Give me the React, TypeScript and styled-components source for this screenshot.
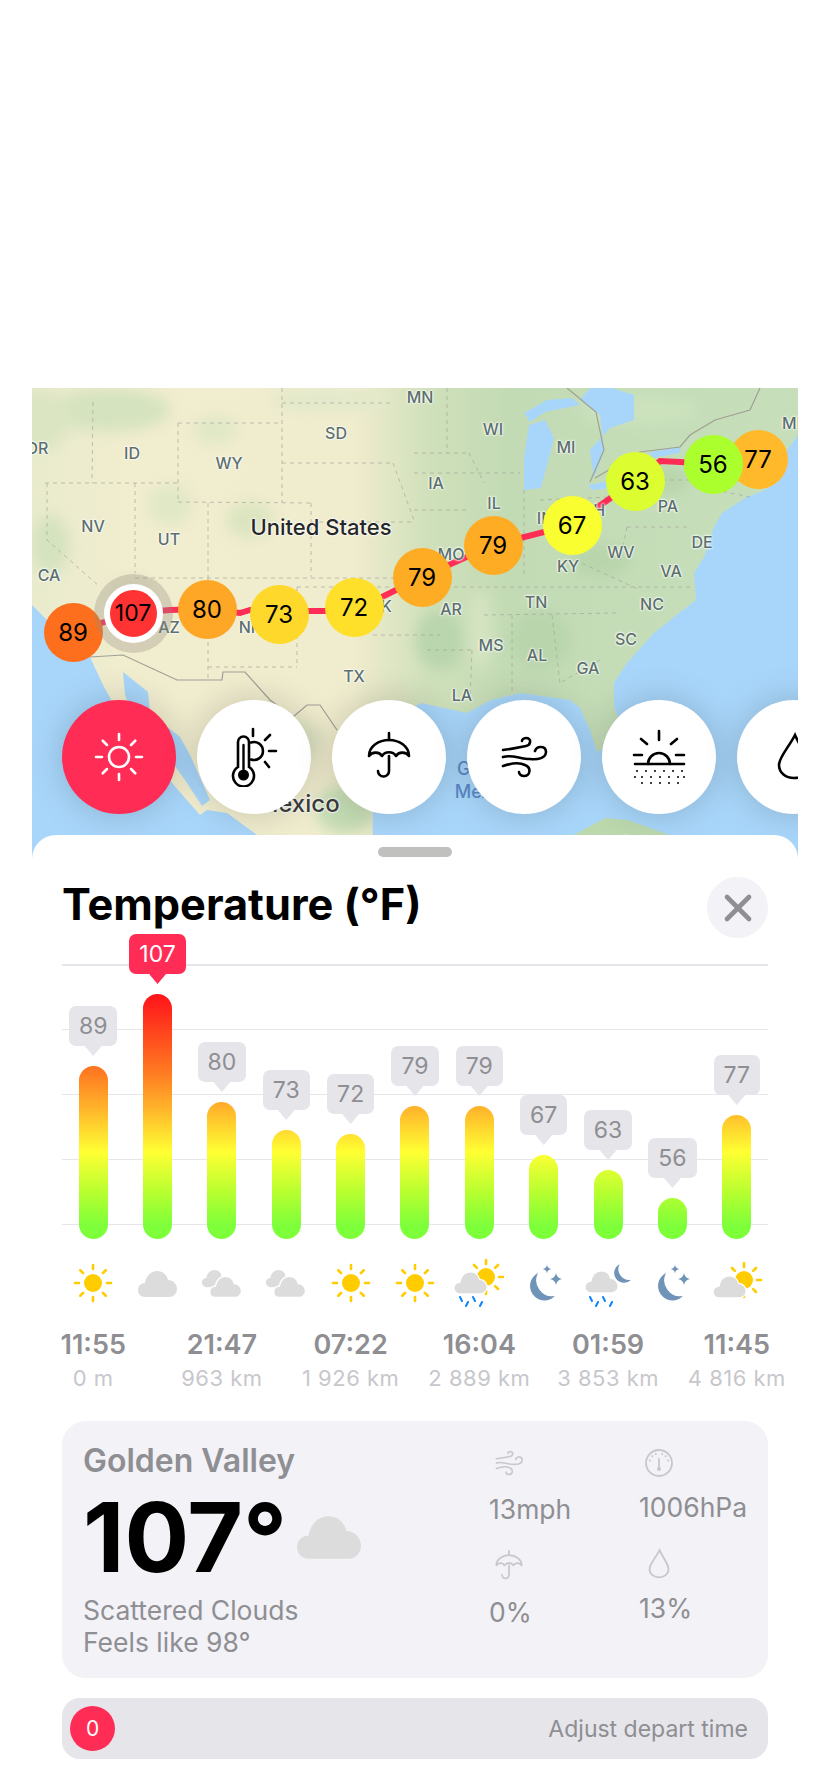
import React from "react"
import styled, { createGlobalStyle } from "styled-components"

const pink = "#ff2d55"
const gray = "#8e8e93"
const lightGray = "#c7c7cc"
const sunYellow = "#ffcc00"
const cloudGray = "#dcdcdc"
const moonBlue = "#7093b8"
const rainBlue = "#0a84ff"

const GlobalStyle = createGlobalStyle`
  html, body {
    margin: 0;
    padding: 0;
    background: #fff;
  }
  body {
    font-family: "Inter", "Liberation Sans", sans-serif;
  }
`

const Page = styled.div`
  width: 828px;
  height: 1792px;
  box-sizing: border-box;
  padding: 388px 30px 0 32px;
  overflow: hidden;
`

const MapFrame = styled.div`
  position: relative;
  height: 471px;
  overflow: hidden;
  background: #a8d6fa;
`

const MapArt = styled.svg`
  position: absolute;
  inset: 0;
  width: 766px;
  height: 471px;
`

const MapLabel = styled.span<{ $x: number; $y: number }>`
  position: absolute;
  left: ${(p) => p.$x - 32}px;
  top: ${(p) => p.$y - 388}px;
  transform: translate(-50%, -50%);
  font-size: 16px;
  font-weight: 500;
  color: #5b706c;
  white-space: nowrap;
  text-shadow: 0 0 2px #fff, 0 0 2px #fff, 0 0 3px #fff;
`

const CountryLabel = styled(MapLabel)`
  font-size: 22px;
  color: #262626;
`

const MexicoLabel = styled(MapLabel)`
  font-size: 24px;
  color: #3c3c3c;
`

const GulfLabel = styled(MapLabel)`
  font-size: 18px;
  line-height: 23px;
  color: #5a8ac6;
  text-shadow: none;
  text-align: center;
`

const Pin = styled.div<{ $x: number; $y: number; $color: string }>`
  position: absolute;
  left: ${(p) => p.$x - 32 - 29.5}px;
  top: ${(p) => p.$y - 388 - 29.5}px;
  width: 59px;
  height: 59px;
  border-radius: 50%;
  background: ${(p) => p.$color};
  display: flex;
  align-items: center;
  justify-content: center;
  font-size: 24px;
  color: #000;
`

const SelectedPin = styled(Pin)`
  box-sizing: border-box;
  border: 6px solid #fff;
  box-shadow: 0 0 0 10px rgba(150, 140, 128, 0.32);
  font-size: 23px;
`

const ModeStrip = styled.div`
  position: absolute;
  left: 30px;
  top: 312px;
  display: flex;
  gap: 21px;
`

const ModeButton = styled.div<{ $active?: boolean }>`
  flex: none;
  width: 114px;
  height: 114px;
  border-radius: 50%;
  background: ${(p) => (p.$active ? pink : "#fff")};
  box-shadow: 0 0 36px rgba(0, 0, 0, 0.18);
  display: flex;
  align-items: center;
  justify-content: center;
  color: ${(p) => (p.$active ? "#fff" : "#000")};
`

const Sheet = styled.section`
  position: relative;
  margin-top: -24px;
  height: 957px;
  box-sizing: border-box;
  padding: 12px 30px 0;
  background: #fff;
  border-radius: 24px 24px 0 0;
`

const Handle = styled.div`
  width: 74px;
  height: 10px;
  margin: 0 auto;
  border-radius: 5px;
  background: #c0c1bf;
`

const Header = styled.header`
  display: flex;
  align-items: center;
  justify-content: space-between;
  margin-top: 20px;
  height: 61px;
`

const Title = styled.h1`
  margin: 0 0 8px;
  font-size: 43.3px;
  font-weight: 700;
  color: #000;
`

const CloseButton = styled.div`
  width: 61px;
  height: 61px;
  border-radius: 50%;
  background: #f2f2f7;
  display: flex;
  align-items: center;
  justify-content: center;
`

const Chart = styled.div`
  display: grid;
  grid-template-areas: "plot";
  height: 309px;
  margin-top: -8px;
`

const GridLines = styled.div`
  grid-area: plot;
  display: flex;
  flex-direction: column;
  justify-content: space-between;
  padding: 34px 0 14px;
`

const GridLine = styled.div`
  height: 1.5px;
  background: #e5e5ea;
`

const Columns = styled.div`
  grid-area: plot;
  display: grid;
  grid-template-columns: repeat(11, minmax(0, 1fr));
  margin: 0 -1px;
`

const BarColumn = styled.div`
  display: flex;
  flex-direction: column;
  align-items: center;
  justify-content: flex-end;
`

const Bubble = styled.div<{ $hot?: boolean }>`
  position: relative;
  height: 40px;
  padding: 0 10px;
  margin-bottom: 20px;
  border-radius: 7px;
  background: ${(p) => (p.$hot ? pink : "#e5e5ea")};
  color: ${(p) => (p.$hot ? "#fff" : gray)};
  font-size: 23px;
  line-height: 40px;

  &::after {
    content: "";
    position: absolute;
    left: 50%;
    bottom: -10px;
    width: 17px;
    height: 10px;
    background: inherit;
    transform: translateX(-50%);
    clip-path: polygon(0 0, 100% 0, 50% 100%);
  }
`

const Bar = styled.div<{ $height: number }>`
  width: 29px;
  height: ${(p) => p.$height}px;
  border-radius: 15px;
  background-image: linear-gradient(
    to bottom,
    #ff1418 0,
    #ff1f1a 10px,
    #ff7d22 80px,
    #ffb02a 112px,
    #ffff33 158px,
    #b4ff30 200px,
    #7dff3a 232px
  );
  background-size: 100% 245px;
  background-position: bottom;
`

const Forecast = styled.div`
  display: grid;
  grid-template-columns: repeat(11, minmax(0, 1fr));
  margin: 20px -1px 0;
`

const ForecastColumn = styled.div`
  display: flex;
  flex-direction: column;
  align-items: center;
  white-space: nowrap;
`

const TimeText = styled.div`
  margin-top: 23px;
  font-size: 27px;
  line-height: 30px;
  font-weight: 600;
  color: ${gray};
`

const DistanceText = styled.div`
  margin-top: 5px;
  font-size: 22px;
  line-height: 26px;
  letter-spacing: 0.5px;
  color: ${lightGray};
`

const InfoCard = styled.div`
  display: flex;
  height: 257px;
  box-sizing: border-box;
  margin-top: 30px;
  padding: 21px 0 0 21px;
  border-radius: 24px;
  background: #f2f2f7;
`

const Summary = styled.div`
  flex: 1;
`

const Place = styled.div`
  font-size: 32px;
  line-height: 38px;
  font-weight: 600;
  color: ${gray};
`

const TempRow = styled.div`
  display: flex;
  align-items: flex-end;
  gap: 10px;
  margin-top: 7px;
`

const BigTemp = styled.div`
  font-size: 96px;
  line-height: 100px;
  font-weight: 700;
  color: #000;
`

const TempCloud = styled.svg`
  margin-bottom: 28px;
`

const Condition = styled.div`
  margin-top: 7px;
  font-size: 26.5px;
  line-height: 32px;
  color: ${gray};
`

const Stats = styled.div`
  display: flex;
  width: 279px;
  margin-top: 3px;
`

const StatColumn = styled.div<{ $width: number; $gap: number }>`
  display: flex;
  flex-direction: column;
  width: ${(p) => p.$width}px;
  gap: 24px;

  & > div {
    gap: ${(p) => p.$gap}px;
  }
`

const Stat = styled.div`
  display: flex;
  flex-direction: column;
`

const StatIcon = styled.div`
  width: 40px;
  height: 36px;
  display: flex;
  align-items: center;
  justify-content: center;
  color: ${lightGray};
`

const StatValue = styled.div`
  font-size: 26.5px;
  line-height: 30px;
  color: ${gray};
`

const DepartBar = styled.div`
  display: flex;
  align-items: center;
  justify-content: space-between;
  height: 61px;
  margin-top: 20px;
  padding: 0 20px 0 8px;
  border-radius: 18px;
  background: #e5e5ea;
`

const DepartThumb = styled.div`
  width: 45px;
  height: 45px;
  border-radius: 50%;
  background: ${pink};
  color: #fff;
  font-size: 21px;
  display: flex;
  align-items: center;
  justify-content: center;
`

const DepartHint = styled.div`
  font-size: 23px;
  color: ${gray};
`

const stateLabels: [string, number, number][] = [
  ["OR", 37, 448], ["ID", 132, 453], ["WY", 229, 463], ["SD", 336, 433], ["NV", 93, 526],
  ["UT", 169, 539], ["CA", 49, 575], ["AZ", 169, 627], ["NM", 252, 627], ["OK", 380, 606],
  ["TX", 354, 676], ["MN", 420, 397], ["WI", 493, 429], ["MI", 566, 447], ["IA", 436, 483],
  ["IL", 494, 503], ["MO", 451, 554], ["IN", 545, 518], ["OH", 593, 510], ["KY", 568, 566],
  ["PA", 668, 506], ["WV", 621, 552], ["VA", 671, 571], ["DE", 702, 542], ["NC", 652, 604],
  ["TN", 536, 602], ["AR", 451, 609], ["MS", 491, 645], ["AL", 537, 655], ["GA", 588, 668],
  ["SC", 626, 639], ["LA", 462, 695], ["ME", 794, 423], ["Cuba", 640, 842],
]

const stops: { value: number; x: number; y: number; color: string; selected?: boolean }[] = [
  { value: 89, x: 73, y: 632, color: "#fd6f1c" },
  { value: 107, x: 133, y: 613, color: "#ff3333", selected: true },
  { value: 80, x: 207, y: 609, color: "#fea727" },
  { value: 73, x: 279, y: 614, color: "#fed92b" },
  { value: 72, x: 354, y: 607, color: "#fee02b" },
  { value: 79, x: 422, y: 577, color: "#ffac25" },
  { value: 79, x: 493, y: 545, color: "#ffac25" },
  { value: 67, x: 572, y: 525, color: "#f9fe30" },
  { value: 63, x: 635, y: 481, color: "#dcfe30" },
  { value: 77, x: 758, y: 459, color: "#ffb92a" },
  { value: 56, x: 713, y: 464, color: "#aaff2d" },
]

type Weather = "sun" | "cloud" | "clouds" | "sunRain" | "moon" | "moonRain" | "sunCloud"

const samples: { value: number; height: number; weather: Weather; time: string; dist: string; hot?: boolean }[] = [
  { value: 89, height: 173, weather: "sun", time: "11:55", dist: "0 m" },
  { value: 107, height: 245, weather: "cloud", time: "", dist: "", hot: true },
  { value: 80, height: 137, weather: "clouds", time: "21:47", dist: "963 km" },
  { value: 73, height: 109, weather: "clouds", time: "", dist: "" },
  { value: 72, height: 105, weather: "sun", time: "07:22", dist: "1 926 km" },
  { value: 79, height: 133, weather: "sun", time: "", dist: "" },
  { value: 79, height: 133, weather: "sunRain", time: "16:04", dist: "2 889 km" },
  { value: 67, height: 84, weather: "moon", time: "", dist: "" },
  { value: 63, height: 69, weather: "moonRain", time: "01:59", dist: "3 853 km" },
  { value: 56, height: 41, weather: "moon", time: "", dist: "" },
  { value: 77, height: 124, weather: "sunCloud", time: "11:45", dist: "4 816 km" },
]

const cloudPath =
  "M-13 14C-17 14-20 11-20 7C-20 3-17 0-13 0C-12-7-7-12-1-12C5-12 9-8 10-3C15-3 19 1 19 6C19 11 15 14 11 14Z"
const starPath = "M0-6Q.8-.8 6 0Q.8.8 0 6Q-.8.8-6 0Q-.8-.8 0-6Z"
const moonPath = "M-5-10A14.5 14.5 0 1 0 12 13A16 16 0 0 1-5-10Z"
const umbrellaPath =
  "M-20-1C-20-11-10-17 0-17C10-17 20-11 20-1C17-5 10-6 7-1C4-6-4-6-7-1C-10-6-17-5-20-1Z"
const windPaths = [
  "M-21-7C-12-8-3-10 2-11C7-12 8-19 2-19C-1-19-2-17-2-16",
  "M-21 0C-12-3-4 2 6 2C14 3 22 1 22-5C22-11 13-12 11-6",
  "M-21 9C-12 6-5 5 1 8C8 11 6 19 0 19C-3 19-5 17-5 15",
]

function Rays({ cx, cy, from, to, color, width }: { cx: number; cy: number; from: number; to: number; color: string; width: number }) {
  return (
    <g stroke={color} strokeWidth={width} strokeLinecap="round">
      {[0, 45, 90, 135, 180, 225, 270, 315].map((a) => {
        const c = Math.cos((a * Math.PI) / 180)
        const s = Math.sin((a * Math.PI) / 180)
        return <line key={a} x1={cx + c * from} y1={cy + s * from} x2={cx + c * to} y2={cy + s * to} />
      })}
    </g>
  )
}

function Rain({ dx }: { dx: number }) {
  return (
    <g stroke={rainBlue} strokeWidth="2" strokeLinecap="round">
      <line x1={dx - 1} y1="14" x2={dx + 1} y2="18" />
      <line x1={dx + 7} y1="19" x2={dx + 5} y2="23" />
      <line x1={dx + 12} y1="14" x2={dx + 14} y2="18" />
      <line x1={dx + 21} y1="19" x2={dx + 19} y2="23" />
    </g>
  )
}

function WeatherIcon({ kind }: { kind: Weather }) {
  return (
    <svg width="52" height="48" viewBox="-26 -24 52 48">
      {kind === "sun" && (
        <>
          <circle r="9" fill={sunYellow} />
          <Rays cx={0} cy={0} from={14} to={18} color={sunYellow} width={2.6} />
        </>
      )}
      {kind === "cloud" && <path d={cloudPath} fill={cloudGray} />}
      {kind === "clouds" && (
        <>
          <path d={cloudPath} fill={cloudGray} transform="translate(-7 -5) scale(.66)" />
          <path d={cloudPath} fill={cloudGray} stroke="#fff" strokeWidth="1.8" transform="translate(4 3) scale(.82)" />
        </>
      )}
      {(kind === "sunRain" || kind === "sunCloud") && (
        <>
          <circle cx="7" cy={kind === "sunRain" ? -6 : -3} r="9" fill={sunYellow} />
          <Rays cx={7} cy={kind === "sunRain" ? -6 : -3} from={13} to={17} color={sunYellow} width={2.6} />
        </>
      )}
      {kind === "sunRain" && (
        <>
          <path d={cloudPath} fill={cloudGray} stroke="#fff" strokeWidth="1.5" transform="translate(-8 -1) scale(.85)" />
          <Rain dx={-18} />
        </>
      )}
      {kind === "sunCloud" && (
        <path d={cloudPath} fill={cloudGray} stroke="#fff" strokeWidth="1.5" transform="translate(-7 3) scale(.85)" />
      )}
      {kind === "moon" && (
        <>
          <path d={moonPath} fill={moonBlue} transform="translate(-1 0)" />
          <path d={starPath} fill={moonBlue} transform="translate(3 -14) scale(.7)" />
          <path d={starPath} fill={moonBlue} transform="translate(12 -4)" />
        </>
      )}
      {kind === "moonRain" && (
        <>
          <path d={moonPath} fill={moonBlue} transform="translate(15 -12) scale(.68)" />
          <path d={cloudPath} fill={cloudGray} stroke="#fff" strokeWidth="1.5" transform="translate(-6 -2) scale(.85)" />
          <Rain dx={-17} />
        </>
      )}
    </svg>
  )
}

function ThermoSunIcon() {
  return (
    <svg width="60" height="60" viewBox="-30 -30 60 60" fill="none" stroke="currentColor" strokeWidth="2.6" strokeLinecap="round">
      <path d="M-16 10V-15A5.5 5.5 0 0 1-5-15V10A10.5 10.5 0 1 1-16 10Z" />
      <path d="M-10.5-12V12" strokeWidth="2.4" />
      <circle cx="-10.5" cy="18" r="5.5" fill="currentColor" stroke="none" />
      <path d="M-3-14.5A9 9 0 1 1-3 2.5" />
      <path d="M-1-28V-21M11-17L16-22M15-6H22M11 5L15 10" />
    </svg>
  )
}

function UmbrellaIcon({ size, weight }: { size: number; weight: number }) {
  return (
    <svg width={size} height={size} viewBox="-30 -30 60 60" fill="none" stroke="currentColor" strokeWidth={weight} strokeLinecap="round" strokeLinejoin="round">
      <path d={umbrellaPath} />
      <path d="M0-24V-17M0-1V14A5.5 5.5 0 0 1-11 14" />
    </svg>
  )
}

function WindIcon({ size, weight }: { size: number; weight: number }) {
  return (
    <svg width={size} height={size} viewBox="-30 -30 60 60" fill="none" stroke="currentColor" strokeWidth={weight} strokeLinecap="round">
      {windPaths.map((d) => (
        <path key={d} d={d} />
      ))}
    </svg>
  )
}

function SunsetIcon() {
  const rows = [
    { y: 14, xs: [-22, -13, -4, 5, 14, 23] },
    { y: 20, xs: [-24, -17, -8, 1, 10, 19, 25] },
    { y: 26, xs: [-17, -8, 1, 10, 19] },
  ]
  return (
    <svg width="60" height="60" viewBox="-30 -30 60 60" fill="none" stroke="currentColor" strokeWidth="2.6" strokeLinecap="round">
      <path d="M-11 7A11 11 0 0 1 11 7" />
      <path d="M-24 7H25M0-26V-17M-18-18L-12-13M18-18L12-13M-25-2H-17M17-2H25" />
      {rows.map((r) => r.xs.map((x) => <circle key={`${r.y}-${x}`} cx={x} cy={r.y} r="1" fill="currentColor" stroke="none" />))}
    </svg>
  )
}

function DropIcon({ size, weight }: { size: number; weight: number }) {
  return (
    <svg width={size} height={size} viewBox="-30 -30 60 60" fill="none" stroke="currentColor" strokeWidth={weight}>
      <path d="M1-22C-5-10-15 0-15 8C-15 16-8 21 0 21C8 21 15 16 15 8C15 0 6-10 1-22Z" />
    </svg>
  )
}

function GaugeIcon() {
  return (
    <svg width="30" height="30" viewBox="-15 -15 30 30" fill="none" stroke="currentColor" strokeWidth="1.8" strokeLinecap="round">
      <circle r="13" />
      <path d="M0-4V5" />
      <circle cy="6" r="2" fill="currentColor" stroke="none" />
      {[-75, -45, -20, 20, 45, 75].map((a) => (
        <circle key={a} cx={Math.sin((a * Math.PI) / 180) * 9.5} cy={-Math.cos((a * Math.PI) / 180) * 9.5} r="1" fill="currentColor" stroke="none" />
      ))}
    </svg>
  )
}

const greenBlobs: [number, number, number, number, string][] = [
  [110, 410, 60, 22, "#d6e3bf"],
  [40, 420, 30, 30, "#dbe5c2"],
  [215, 430, 22, 14, "#e0e8c6"],
  [250, 520, 24, 18, "#dbe5c0"],
  [170, 505, 22, 20, "#e0e8c6"],
  [50, 545, 20, 30, "#d6e3bf"],
  [330, 400, 60, 12, "#e2e9ca"],
  [130, 590, 22, 14, "#e6e6c8"],
  [345, 810, 30, 24, "#c4dcb4"],
  [300, 740, 22, 20, "#dde3c2"],
  [480, 630, 12, 40, "#d5e4c2"],
  [600, 560, 30, 16, "#b8d5ac"],
  [660, 480, 30, 14, "#b8d5ac"],
  [440, 640, 24, 30, "#b9d6ae"],
  [540, 640, 30, 30, "#b8d5ac"],
  [640, 410, 60, 16, "#cbe2bd"],
]

const stateLines = [
  "282,403 390,403", "93,402 92,483", "45,483 178,483", "47,483 47,540 100,587", "135,483 135,573",
  "178,423 178,502", "178,423 282,423", "282,388 282,503", "178,502 310,503", "208,503 208,578",
  "135,578 414,578", "208,578 208,680", "208,667 297,667", "297,587 297,667", "297,587 393,587",
  "282,463 393,463", "311,503 311,577", "311,522 414,522", "373,635 440,635", "393,463 414,520",
  "447,388 447,453", "414,453 469,453", "469,453 484,483", "414,473 520,473", "524,490 524,577",
  "414,510 467,510", "414,587 694,587", "484,615 617,613", "512,615 512,693", "552,615 560,683",
  "427,650 472,650", "472,650 470,700", "627,527 690,527", "627,527 620,560", "575,560 640,590",
  "630,480 700,480", "600,660 560,683", "540,500 610,497", "715,490 750,497",
]

function MapDrawing() {
  return (
    <MapArt viewBox="32 388 766 471">
      <defs>
        <linearGradient id="land" x1="0" x2="1" y1="0" y2="0">
          <stop offset="0" stopColor="#e9ebcd" />
          <stop offset="0.12" stopColor="#f1edcf" />
          <stop offset="0.42" stopColor="#f0ecce" />
          <stop offset="0.52" stopColor="#cfe0ba" />
          <stop offset="0.62" stopColor="#c3dbb5" />
          <stop offset="1" stopColor="#c6dfba" />
        </linearGradient>
        <filter id="soft" x="-30%" y="-30%" width="160%" height="160%">
          <feGaussianBlur stdDeviation="7" />
        </filter>
        <clipPath id="landClip">
          <polygon points="32,388 798,388 798,435 787,450 777,483 760,492 747,497 722,513 714,527 704,557 694,573 696,600 674,617 654,633 627,663 614,683 614,707 620,722 610,745 597,752 590,730 580,708 570,700 521,693 491,700 467,713 421,703 414,707 383,720 372,750 373,859 270,859 257,835 227,813 207,810 200,815 178,790 150,755 125,725 103,685 90,657 55,628 32,605" />
        </clipPath>
      </defs>
      <rect x="32" y="388" width="766" height="471" fill="url(#land)" clipPath="url(#landClip)" />
      <g clipPath="url(#landClip)" filter="url(#soft)">
        {greenBlobs.map(([cx, cy, rx, ry, fill]) => (
          <ellipse key={`${cx}-${cy}`} cx={cx} cy={cy} rx={rx} ry={ry} fill={fill} />
        ))}
      </g>
      <polygon points="123,672 148,692 150,713 180,737 190,755 210,800 202,806 185,780 160,745 133,715 125,695" fill="#a8d6fa" />
      <polygon points="524,458 529,425 545,420 554,438 541,488 524,490" fill="#a8d6fa" />
      <polygon points="524,413 547,400 572,398 580,405 545,412 530,422" fill="#a8d6fa" />
      <polygon points="580,400 600,415 604,450 594,478 590,450 610,428 634,420 634,395 612,388 590,388" fill="#a8d6fa" />
      <polygon points="588,485 615,480 612,488 592,490" fill="#a8d6fa" />
      <polygon points="650,452 680,447 680,453 652,458" fill="#a8d6fa" />
      <polygon points="572,836 605,818 628,820 672,836 672,859 572,859" fill="#bcd9ae" />
      <g fill="none" stroke="#a6a69c" strokeWidth="1" strokeDasharray="4 4" opacity="0.7">
        {stateLines.map((points) => (
          <polyline key={points} points={points} />
        ))}
      </g>
      <g fill="none" stroke="#a09f95" strokeWidth="1.2">
        <polyline points="90,657 123,655 177,680 222,680 223,672 245,672 270,700 293,717 307,705 320,705 337,730" />
        <polyline points="760,388 750,410 715,420 690,435 680,447 640,452 595,478" />
        <polyline points="567,388 596,412 604,450 590,482" />
      </g>
      <polyline
        points="73,632 133,613 170,610 207,609 240,613 250,610 279,614 300,611 354,611 422,577 493,545 572,525 635,481 660,461 680,462 713,464"
        fill="none"
        stroke={pink}
        strokeWidth="6"
      />
    </MapArt>
  )
}

export default function App() {
  return (
    <Page>
      <GlobalStyle />
      <MapFrame>
        <MapDrawing />
        {stateLabels.map(([text, x, y]) => (
          <MapLabel key={text} $x={x} $y={y}>
            {text}
          </MapLabel>
        ))}
        <CountryLabel $x={321} $y={527}>United States</CountryLabel>
        <MexicoLabel $x={298} $y={803}>Mexico</MexicoLabel>
        <GulfLabel $x={486} $y={780}>
          Gulf of
          <br />
          Mexico
        </GulfLabel>
        {stops.map((s) =>
          s.selected ? (
            <SelectedPin key={s.x} $x={s.x} $y={s.y} $color={s.color}>
              {s.value}
            </SelectedPin>
          ) : (
            <Pin key={s.x} $x={s.x} $y={s.y} $color={s.color}>
              {s.value}
            </Pin>
          )
        )}
        <ModeStrip>
          <ModeButton $active>
            <svg width="60" height="60" viewBox="-30 -30 60 60" fill="none" stroke="currentColor" strokeWidth="2.6">
              <circle r="10" />
              <Rays cx={0} cy={0} from={17} to={23} color="currentColor" width={2.6} />
            </svg>
          </ModeButton>
          <ModeButton>
            <ThermoSunIcon />
          </ModeButton>
          <ModeButton>
            <UmbrellaIcon size={60} weight={2.6} />
          </ModeButton>
          <ModeButton>
            <WindIcon size={60} weight={2.6} />
          </ModeButton>
          <ModeButton>
            <SunsetIcon />
          </ModeButton>
          <ModeButton>
            <DropIcon size={60} weight={2.6} />
          </ModeButton>
        </ModeStrip>
      </MapFrame>

      <Sheet>
        <Handle />
        <Header>
          <Title>Temperature (°F)</Title>
          <CloseButton>
            <svg width="30" height="30" viewBox="0 0 30 30" stroke={gray} strokeWidth="4.6" strokeLinecap="round">
              <line x1="4" y1="4" x2="26" y2="26" />
              <line x1="26" y1="4" x2="4" y2="26" />
            </svg>
          </CloseButton>
        </Header>

        <Chart>
          <GridLines>
            <GridLine />
            <GridLine />
            <GridLine />
            <GridLine />
            <GridLine />
          </GridLines>
          <Columns>
            {samples.map((s, i) => (
              <BarColumn key={i}>
                <Bubble $hot={s.hot}>{s.value}</Bubble>
                <Bar $height={s.height} />
              </BarColumn>
            ))}
          </Columns>
        </Chart>

        <Forecast>
          {samples.map((s, i) => (
            <ForecastColumn key={i}>
              <WeatherIcon kind={s.weather} />
              {s.time && <TimeText>{s.time}</TimeText>}
              {s.dist && <DistanceText>{s.dist}</DistanceText>}
            </ForecastColumn>
          ))}
        </Forecast>

        <InfoCard>
          <Summary>
            <Place>Golden Valley</Place>
            <TempRow>
              <BigTemp>107°</BigTemp>
              <TempCloud width="64" height="43" viewBox="-20 -12 39 26">
                <path d={cloudPath} fill="#dcdcdc" />
              </TempCloud>
            </TempRow>
            <Condition>
              Scattered Clouds
              <br />
              Feels like 98°
            </Condition>
          </Summary>
          <Stats>
            <StatColumn $width={150} $gap={13}>
              <Stat>
                <StatIcon>
                  <WindIcon size={36} weight={2.6} />
                </StatIcon>
                <StatValue>13mph</StatValue>
              </Stat>
              <Stat>
                <StatIcon>
                  <UmbrellaIcon size={38} weight={2.8} />
                </StatIcon>
                <StatValue>0%</StatValue>
              </Stat>
            </StatColumn>
            <StatColumn $width={129} $gap={11}>
              <Stat>
                <StatIcon>
                  <GaugeIcon />
                </StatIcon>
                <StatValue>1006hPa</StatValue>
              </Stat>
              <Stat>
                <StatIcon>
                  <DropIcon size={38} weight={2.8} />
                </StatIcon>
                <StatValue>13%</StatValue>
              </Stat>
            </StatColumn>
          </Stats>
        </InfoCard>

        <DepartBar>
          <DepartThumb>0</DepartThumb>
          <DepartHint>Adjust depart time</DepartHint>
        </DepartBar>
      </Sheet>
    </Page>
  )
}
